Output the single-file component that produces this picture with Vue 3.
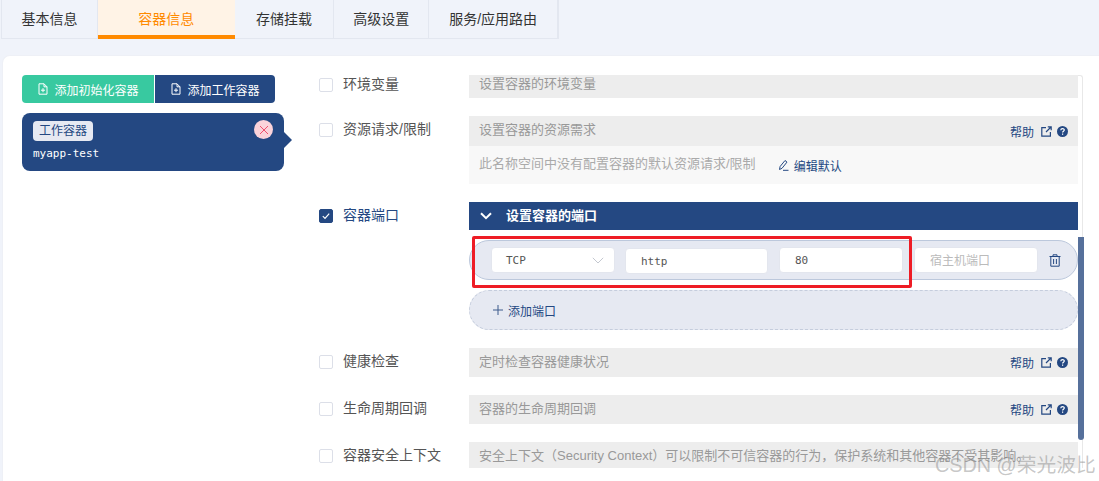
<template>
  <div class="page">
    <div class="tabs">
      <div
        v-for="tab in tabs"
        :key="tab.name"
        class="tab"
        :class="{ active: tab.name === '容器信息' }"
        :style="{ width: tab.width + 'px' }"
      >{{ tab.name }}</div>
    </div>

    <div class="panel">
      <div class="left">
        <div class="btn-group">
          <button class="add-btn green">
            <svg width="12" height="12" viewBox="0 0 12 12" fill="none" stroke="currentColor" stroke-width="1">
              <path d="M2 .8h5l3 3v7.4H2zM7 .8v3h3M6 5.2v4M4 7.2h4" />
            </svg>
            添加初始化容器
          </button>
          <button class="add-btn blue">
            <svg width="12" height="12" viewBox="0 0 12 12" fill="none" stroke="currentColor" stroke-width="1">
              <path d="M2 .8h5l3 3v7.4H2zM7 .8v3h3M6 5.2v4M4 7.2h4" />
            </svg>
            添加工作容器
          </button>
        </div>
        <div class="container-card">
          <span class="tag">工作容器</span>
          <div class="container-name">myapp-test</div>
          <span class="close">
            <svg width="10" height="10" viewBox="0 0 10 10" stroke="#f0506e" stroke-width="1" fill="none">
              <path d="M1 1l8 8M9 1l-8 8" />
            </svg>
          </span>
        </div>
      </div>

      <div class="scroller">
        <div class="scroll-inner">
          <div class="row first">
            <div class="row-label"><span class="check"></span>环境变量</div>
            <div class="bar bar-first"><span class="bar-text">设置容器的环境变量</span></div>
          </div>

          <div class="row">
            <div class="row-label"><span class="check"></span>资源请求/限制</div>
            <div>
              <div class="bar bar-tall">
                <span class="bar-text">设置容器的资源需求</span>
                <span class="help">
                  帮助
                  <svg class="ext" width="11" height="11" viewBox="0 0 11 11" fill="none" stroke="#244882" stroke-width="1.2">
                    <path d="M5 1.6H.8v8.6h8.6V6M5 6l5-5M6.8.8h3.4v3.4" />
                  </svg>
                  <svg width="11" height="11" viewBox="0 0 11 11">
                    <circle cx="5.5" cy="5.5" r="5.5" fill="#244882" />
                    <path d="M3.8 4.3c0-2.2 3.5-2.2 3.5-.2 0 1.2-1.7 1.2-1.7 2.5" fill="none" stroke="#fff" stroke-width="1.2" />
                    <rect x="5" y="7.5" width="1.2" height="1.3" fill="#fff" />
                  </svg>
                </span>
              </div>
              <div class="sub-bar">
                <span class="bar-text">此名称空间中没有配置容器的默认资源请求/限制</span>
                <span class="edit">
                  <svg width="11" height="12" viewBox="0 0 11 12" fill="none" stroke="#244882" stroke-width="1">
                    <path d="M1.5 10.5l.6-3L7 1.5l2 1.6-5 6.2zM5 11.3h5.5" />
                  </svg>
                  编辑默认
                </span>
              </div>
            </div>
          </div>

          <div class="row">
            <div class="row-label on"><span class="check checked">
              <svg width="10" height="10" viewBox="0 0 10 10" fill="none" stroke="#fff" stroke-width="1.2">
                <path d="M1.8 5.2l2.2 2.2 4.2-4.8" />
              </svg>
            </span>容器端口</div>
            <div>
              <div class="section-head">
                <svg width="12" height="8" viewBox="0 0 12 8" fill="none" stroke="#fff" stroke-width="2">
                  <path d="M1 1.2l5 5 5-5" />
                </svg>
                <span class="head-text">设置容器的端口</span>
              </div>
              <div class="port-wrap">
                <div class="port-row">
                  <div class="field select">
                    TCP
                    <svg width="12" height="7" viewBox="0 0 12 7" fill="none" stroke="#c4c8d0" stroke-width="1">
                      <path d="M.8.8L6 6l5.2-5.2" />
                    </svg>
                  </div>
                  <div class="field name">http</div>
                  <div class="field">80</div>
                  <div class="field placeholder"><span class="holder-text">宿主机端口</span></div>
                  <svg class="trash" width="12" height="13" viewBox="0 0 12 13" fill="none" stroke="#244882" stroke-width="1">
                    <path d="M.5 2.5h11M4 2.5V.8h4v1.7M1.8 2.5v9.7h8.4V2.5M4.6 5v5M7.4 5v5" />
                  </svg>
                </div>
                <div class="highlight"></div>
              </div>
              <div class="add-port">
                <svg width="10" height="10" viewBox="0 0 10 10" stroke="#3c5a8c" stroke-width="1">
                  <path d="M5 0v10M0 5h10" />
                </svg>
                添加端口
              </div>
            </div>
          </div>

          <div v-for="item in lowerRows" :key="item.label" class="row">
            <div class="row-label"><span class="check"></span>{{ item.label }}</div>
            <div class="bar">
              <span class="bar-text">{{ item.text }}</span>
              <span v-if="item.help" class="help">
                帮助
                <svg class="ext" width="11" height="11" viewBox="0 0 11 11" fill="none" stroke="#244882" stroke-width="1.2">
                  <path d="M5 1.6H.8v8.6h8.6V6M5 6l5-5M6.8.8h3.4v3.4" />
                </svg>
                <svg width="11" height="11" viewBox="0 0 11 11">
                  <circle cx="5.5" cy="5.5" r="5.5" fill="#244882" />
                  <path d="M3.8 4.3c0-2.2 3.5-2.2 3.5-.2 0 1.2-1.7 1.2-1.7 2.5" fill="none" stroke="#fff" stroke-width="1.2" />
                  <rect x="5" y="7.5" width="1.2" height="1.3" fill="#fff" />
                </svg>
              </span>
            </div>
          </div>
        </div>

        <div class="scroll-track"></div>
        <div class="scroll-thumb"></div>
      </div>
    </div>

    <div class="watermark">CSDN @荣光波比</div>
  </div>
</template>

<script setup>
const tabs = [
  { name: '基本信息', width: 96 },
  { name: '容器信息', width: 137 },
  { name: '存储挂载', width: 100 },
  { name: '高级设置', width: 95 },
  { name: '服务/应用路由', width: 129 }
]

const lowerRows = [
  { label: '健康检查', text: '定时检查容器健康状况', help: true },
  { label: '生命周期回调', text: '容器的生命周期回调', help: true },
  { label: '容器安全上下文', text: '安全上下文（Security Context）可以限制不可信容器的行为，保护系统和其他容器不受其影响。', help: false }
]
</script>

<style scoped>
.page {
  position: relative;
  height: 481px;
  overflow: hidden;
  background: #f0f3fa;
  font-family: "Liberation Sans", "Noto Sans CJK SC", sans-serif;
  color: #333;
}

.tabs {
  display: flex;
  height: 39px;
  margin-left: 1px;
  width: 558px;
  box-sizing: border-box;
  border: 1px solid #e3e7f0;
  border-top: 0;
}

.tab {
  display: flex;
  align-items: center;
  justify-content: center;
  box-sizing: border-box;
  font-size: 14px;
  border-right: 1px solid #e3e7f0;
  padding-bottom: 2px;
}

.tab.active {
  color: #ff8a00;
  background: #fff3e6;
  border-right: 0;
  border-bottom: 4px solid #ff8a00;
  margin-bottom: -1px;
  padding-bottom: 0;
}

.panel {
  display: flex;
  margin: 16px 0 0 2px;
  padding: 19px 0 0 19px;
  height: 426px;
  background: #fff;
  border-radius: 8px 0 0 0;
  border: 1px solid #eef0f6;
  border-width: 1px 0 0 1px;
  box-sizing: border-box;
}

.left {
  width: 297px;
  flex: none;
}

.btn-group {
  display: flex;
  gap: 1px;
}

.add-btn {
  display: flex;
  align-items: center;
  justify-content: center;
  gap: 5px;
  height: 28px;
  padding: 0;
  border: 0;
  color: #fff;
  font-family: inherit;
  font-size: 12px;
}

.add-btn.green {
  width: 132px;
  background: #38c9a0;
  border-radius: 4px 0 0 4px;
}

.add-btn.blue {
  width: 120px;
  background: #244882;
  border-radius: 0 4px 4px 0;
}

.container-card {
  position: relative;
  width: 262px;
  height: 58px;
  margin-top: 10px;
  padding: 8px 11px;
  box-sizing: border-box;
  background: #244882;
  border-radius: 8px;
}

.container-card::after {
  content: "";
  position: absolute;
  left: 262px;
  top: 19px;
  border-left: 8px solid #244882;
  border-top: 8px solid transparent;
  border-bottom: 8px solid transparent;
}

.tag {
  display: block;
  width: 60px;
  height: 20px;
  line-height: 20px;
  text-align: center;
  font-size: 12px;
  color: #244882;
  background: #e6e9f2;
  border-radius: 4px;
}

.container-name {
  margin-top: 5px;
  color: #fff;
  font-family: "DejaVu Sans Mono", monospace;
  font-size: 11px;
  line-height: 16px;
}

.close {
  position: absolute;
  right: 11px;
  top: 7px;
  display: flex;
  align-items: center;
  justify-content: center;
  width: 19px;
  height: 19px;
  background: #fbd3da;
  border-radius: 50%;
}

.scroller {
  position: relative;
  width: 765px;
  height: 393px;
  overflow: hidden;
  flex: none;
}

.scroll-inner {
  display: flex;
  flex-direction: column;
  gap: 18px;
  width: 759px;
}

.row {
  display: grid;
  grid-template-columns: 150px 609px;
  flex: none;
}

.row.first {
  margin-top: -4px;
}

.row-label {
  display: flex;
  align-items: flex-start;
  gap: 10px;
  padding-top: 3px;
  font-size: 14px;
  line-height: 20px;
  color: #555;
}

.row-label.on {
  color: #244882;
}

.check {
  display: flex;
  align-items: center;
  justify-content: center;
  width: 14px;
  height: 14px;
  margin-top: 4px;
  box-sizing: border-box;
  border: 1px solid #dcdfe8;
  border-radius: 2px;
  background: #fff;
}

.check.checked {
  background: #244882;
  border-color: #244882;
}

.bar {
  display: flex;
  align-items: center;
  justify-content: space-between;
  height: 29px;
  padding: 0 10px;
  box-sizing: border-box;
  background: #ededed;
  color: #999;
  font-size: 13px;
  white-space: nowrap;
}

.bar-first {
  height: 27px;
}

.bar-tall {
  height: 30px;
}

/* the grey text sits a little above the middle of its bar */
.bar-text {
  margin-bottom: 5px;
}

.head-text {
  margin-bottom: 3px;
}

.holder-text {
  margin-bottom: 1px;
}

.help {
  display: flex;
  align-items: center;
  color: #244882;
  font-size: 12px;
}

.help .ext {
  margin: 0 5px 0 7px;
}

.sub-bar {
  display: flex;
  align-items: center;
  height: 38px;
  padding-left: 10px;
  background: #f8f8f8;
  color: #aaa;
  font-size: 13px;
}

.edit {
  display: flex;
  align-items: center;
  gap: 5px;
  margin-left: 22px;
  color: #244882;
  font-size: 12px;
}

.section-head {
  display: flex;
  align-items: center;
  gap: 14px;
  height: 28px;
  padding-left: 11px;
  background: #244882;
  color: #fff;
  font-size: 13px;
  font-weight: 700;
}

.port-wrap {
  position: relative;
  margin-top: 10px;
}

.port-row {
  display: flex;
  align-items: center;
  gap: 11px;
  height: 40px;
  padding-left: 21px;
  box-sizing: border-box;
  background: #e6e9f2;
  border: 1px solid #bcc8dc;
  border-radius: 20px;
}

.field {
  display: flex;
  align-items: center;
  justify-content: space-between;
  width: 124px;
  height: 26px;
  padding: 0 15px;
  box-sizing: border-box;
  background: #fff;
  border: 1px solid #e3e6ee;
  border-radius: 4px;
  font-family: "DejaVu Sans Mono", monospace;
  font-size: 11px;
  color: #555;
}

.field.select {
  padding: 0 10px 0 14px;
  margin-right: -1px;
}

.field.name {
  width: 143px;
  margin-top: 2px;
}

.field.placeholder {
  font-family: "Liberation Sans", "Noto Sans CJK SC", sans-serif;
  font-size: 12px;
  color: #bbb;
}

.highlight {
  position: absolute;
  left: 3px;
  top: -4px;
  width: 440px;
  height: 52px;
  box-sizing: border-box;
  border: 3px solid #ee1c25;
  border-radius: 2px;
}

.add-port {
  display: flex;
  align-items: center;
  gap: 5px;
  height: 40px;
  margin-top: 10px;
  padding-left: 23px;
  box-sizing: border-box;
  background: #e6e9f2;
  border: 1px dashed #c5cddd;
  border-radius: 20px;
  color: #244882;
  font-size: 12px;
}

.scroll-track {
  position: absolute;
  left: 759px;
  top: 0;
  bottom: 0;
  width: 5px;
  box-sizing: border-box;
  border: 1px solid #e8e8e8;
  border-left: 0;
  border-bottom: 0;
  border-radius: 0 3px 0 0;
}

.scroll-thumb {
  position: absolute;
  left: 759px;
  top: 162px;
  width: 6px;
  height: 203px;
  background: #56709b;
  border-radius: 0 0 3px 3px;
}

.watermark {
  position: absolute;
  left: 935px;
  top: 452px;
  font-size: 19.8px;
  line-height: 26px;
  white-space: nowrap;
  color: rgba(130, 130, 130, 0.45);
}
</style>
